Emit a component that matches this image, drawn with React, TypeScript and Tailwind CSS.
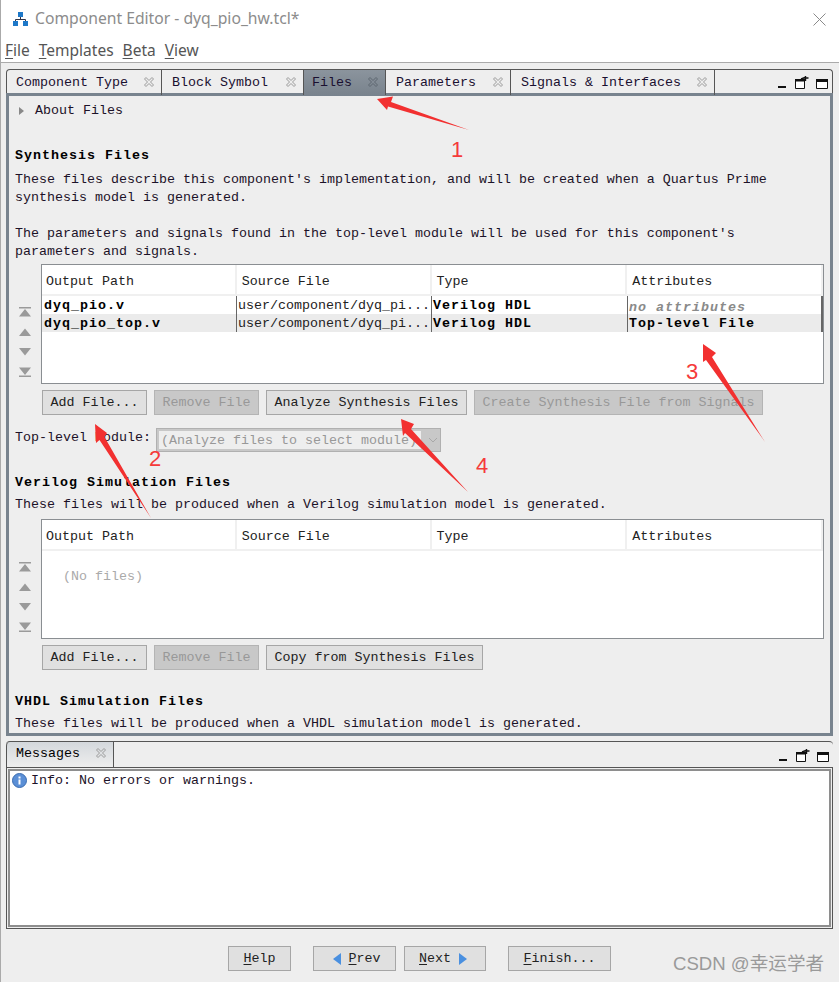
import React from 'react';

const mono = "font-['Liberation_Mono',monospace] text-[13.33px]";
// the bold face in this UI is one pixel wider per character
const bold = 'font-bold tracking-[1px]';

const Shortcut = ({ text }: { text: string }) => (
  <span>
    <span className="underline underline-offset-2">{text[0]}</span>
    {text.slice(1)}
  </span>
);

const CloseMark = ({ color = '#9a9a9a' }: { color?: string }) => (
  <svg width="12" height="12" viewBox="0 0 12 12" className="shrink-0 -mt-[2px]">
    <path d="M1.5 3 3 1.5 6 4.5 9 1.5 10.5 3 7.5 6 10.5 9 9 10.5 6 7.5 3 10.5 1.5 9 4.5 6Z" fill="none" stroke={color} strokeWidth="1" />
  </svg>
);

// minimize / float / maximize glyphs on the dock strip
const DockButtons = () => (
  <div className="flex items-end pb-[5px]">
    <svg width="8" height="2" viewBox="0 0 8 2" className="mb-[1px]"><rect width="8" height="2" fill="#111" /></svg>
    <svg width="14" height="13" viewBox="0 0 14 13" className="ml-[9px]">
      <path d="M.5 3.5h9v9h-9z" fill="#fff" stroke="#111" />
      <rect y="3" width="10" height="2.5" fill="#111" />
      <path d="M6 3 10 1.5M10.5 0v5M9 2h4.5" stroke="#111" strokeWidth="1.4" fill="none" />
    </svg>
    <svg width="12" height="10" viewBox="0 0 12 10" className="ml-[7px]">
      <path d="M.5.5h11v9H.5z" fill="#fff" stroke="#111" />
      <rect width="12" height="3" fill="#111" />
    </svg>
  </div>
);

const Tab = ({ label, box, active }: { label: string; box: string; active?: boolean }) => (
  <div
    className={`${box} h-[25px] flex items-center justify-between pr-[6px] border-r border-[#555] ${
      active ? 'bg-gradient-to-b from-[#8b949d] to-[#79838d]' : ''
    }`}
  >
    <span className="text-[#1a1030]">{label}</span>
    <CloseMark color={active ? '#5d6670' : '#9a9a9a'} />
  </div>
);

const Btn = ({ children, disabled, className = '' }: { children: React.ReactNode; disabled?: boolean; className?: string }) => (
  <div
    className={`h-[25px] flex items-center border whitespace-nowrap ${
      disabled ? 'bg-[#c8c8c8] border-[#b4b4b4] text-[#989898]' : 'bg-[#e0e0e0] border-[#a6a6a6] text-[#222]'
    } ${className}`}
  >
    {children}
  </div>
);

const MoveArrows = () => (
  <div className="w-[26px] pl-[3px] flex flex-col justify-end gap-[10px] pb-[7px] shrink-0">
    <svg width="14" height="10" viewBox="0 0 14 10"><path d="M1 0h12v1.5H1zM7 2l6 7.5H1z" fill="#9a9a9a" /></svg>
    <svg width="14" height="10" viewBox="0 0 14 10"><path d="M7 1.5l6 7.5H1z" fill="#9a9a9a" /></svg>
    <svg width="14" height="10" viewBox="0 0 14 10"><path d="M7 8.5 13 1H1z" fill="#9a9a9a" /></svg>
    <svg width="14" height="10" viewBox="0 0 14 10"><path d="M7 8L13 .5H1zM1 8.5h12V10H1z" fill="#9a9a9a" /></svg>
  </div>
);

const columns = ['Output Path', 'Source File', 'Type', 'Attributes'];
const colWidths = ['w-[195px] pl-[4px]', 'w-[195px] pl-[5px]', 'w-[196px] pl-[5px]', 'w-[196px] pl-[5px]'];

const FileTable = ({ children }: { children: React.ReactNode }) => (
  <div className="flex">
    <MoveArrows />
    <div className="w-[783px] h-[120px] bg-white border border-[#8a8e92]">
      <div className="flex h-[31px] border-b-2 border-[#f0f0f0]">
        {columns.map((c, i) => (
          <div key={c} className={`${colWidths[i]} pt-[4px] flex items-center border-r-2 border-[#f0f0f0] text-[#222]`}>
            {c}
          </div>
        ))}
      </div>
      {children}
    </div>
  </div>
);

const FileRow = ({ name, type, attr, muted, shaded }: { name: string; type: string; attr: string; muted?: boolean; shaded?: boolean }) => (
  <div className={`flex h-[18px] leading-[19px] ${shaded ? 'bg-[#ebebeb]' : ''}`}>
    <div className={`w-[194px] pl-[2px] text-black ${bold}`}>{name}</div>
    <div className="w-[195px] pl-[1px] border-l border-[#666] text-[#222]">user/component/dyq_pi...</div>
    <div className={`w-[196px] pl-[1px] border-l border-[#666] text-black ${bold}`}>{type}</div>
    <div className={`w-[196px] pl-[1px] border-l border-r-2 border-[#666] ${bold}`}>
      <span className={muted ? 'block leading-[23px] h-[18px] italic text-[#8a8a8a]' : 'text-black'}>{attr}</span>
    </div>
  </div>
);

const Annotations = () => (
  <>
    <svg width="839" height="982" viewBox="0 0 839 982" className="absolute inset-0 pointer-events-none">
      <path d="M376 99 392 96.5 390 102 468 130 387 106.5 386 110Z" fill="#f23030" />
      <path d="M94 424 106 433 103.5 437 150 518 98.5 440 95 443Z" fill="#f23030" />
      <path d="M702 344 715 353 711 357 764 442 705 360 702 362Z" fill="#f23030" />
      <path d="M400 419 413 424 410 429 467 492 404 433 402 436Z" fill="#f23030" />
    </svg>
    <span className="absolute left-[450px] top-[137px] font-['Liberation_Sans',sans-serif] text-[22px] leading-[26px] text-[#f53a3a]">1</span>
    <span className="absolute left-[148px] top-[446px] font-['Liberation_Sans',sans-serif] text-[22px] leading-[26px] text-[#f53a3a]">2</span>
    <span className="absolute left-[685px] top-[359px] font-['Liberation_Sans',sans-serif] text-[22px] leading-[26px] text-[#f53a3a]">3</span>
    <span className="absolute left-[475px] top-[453px] font-['Liberation_Sans',sans-serif] text-[22px] leading-[26px] text-[#f53a3a]">4</span>
    <span className="absolute left-[672px] top-[952px] font-['Liberation_Sans','Noto_Sans_CJK_SC',sans-serif] text-[18.6px] leading-[24px] text-[#9a9a9a]">CSDN @幸运学者</span>
  </>
);

export default function App() {
  return (
    <div className={`relative w-[839px] h-[982px] overflow-hidden bg-[#eeeeee] ${mono} border-l border-[#aaa]`}>
      {/* Title and menu */}
      <div className="h-[63px] bg-white border-b border-[#aaa] pl-[4px] font-['Noto_Sans',sans-serif]">
        <div className="h-[38px] flex items-center pl-[8px] pr-[13px] text-[15.7px]">
          <svg width="15" height="14" viewBox="0 0 15 14" className="mr-[7px]">
            <rect x="5" y="0" width="5" height="5" fill="#1e78c8" />
            <path d="M7.5 5v3M2.5 10V7.5h10V10" stroke="#334" fill="none" />
            <rect x="0" y="9" width="5" height="5" fill="#1e78c8" />
            <rect x="10" y="9" width="5" height="5" fill="#1e78c8" />
          </svg>
          <span className="text-[#8c8c8c]">Component Editor - dyq_pio_hw.tcl*</span>
          <svg width="13" height="13" viewBox="0 0 13 13" className="ml-auto"><path d="M.5.5l12 12M12.5.5l-12 12" stroke="#8a8a8a" /></svg>
        </div>
        <div className="flex gap-[9px] text-[15.5px] text-[#555] leading-[24px]">
          <Shortcut text="File" />
          <Shortcut text="Templates" />
          <Shortcut text="Beta" />
          <Shortcut text="View" />
        </div>
      </div>

      {/* Files panel */}
      <div className="mt-[6px] ml-[5px] w-[827px]">
        <div className="h-[25px] flex border border-b-0 border-[#555] rounded-t-[4px] -mb-px">
          <Tab label="Component Type" box="w-[155px] pl-[9px]" />
          <Tab label="Block Symbol" box="w-[142px] pl-[10px]" />
          <Tab label="Files" box="w-[82px] pl-[8px]" active />
          <Tab label="Parameters" box="w-[125px] pl-[10px]" />
          <Tab label="Signals & Interfaces" box="w-[204px] pl-[10px]" />
          <div className="flex-1 flex items-end justify-end pr-[4px]"><DockButtons /></div>
        </div>
        <div className="h-[643px] overflow-hidden border-[3px] border-[#78838e] pl-[6px] pt-[2px] text-[#1c1228]">
          <div className="h-[26px] flex items-center gap-[11px] pl-[4px]">
            <span className="w-0 h-0 border-y-[4px] border-y-transparent border-l-[5px] border-l-[#888]" />
            <span>About Files</span>
          </div>
          <div className={`mt-[23px] h-[18px] leading-[18px] text-black ${bold}`}>Synthesis Files</div>
          <div className="mt-[6px] leading-[18px]">
            These files describe this component's implementation, and will be created when a Quartus Prime<br />
            synthesis model is generated.
          </div>
          <div className="mt-[18px] leading-[18px]">
            The parameters and signals found in the top-level module will be used for this component's<br />
            parameters and signals.
          </div>
          <div className="mt-[3px]">
            <FileTable>
              <FileRow name="dyq_pio.v" type="Verilog HDL" attr="no attributes" muted />
              <FileRow name="dyq_pio_top.v" type="Verilog HDL" attr="Top-level File" shaded />
            </FileTable>
          </div>
          <div className="mt-[6px] ml-[27px] flex gap-[7px]">
            <Btn className="px-[7.5px]">Add File...</Btn>
            <Btn className="px-[7.5px]" disabled>Remove File</Btn>
            <Btn className="px-[7.5px]">Analyze Synthesis Files</Btn>
            <Btn className="px-[7.5px]" disabled>Create Synthesis File from Signals</Btn>
          </div>
          <div className="mt-[13px] h-[24px] flex items-center gap-[5px]">
            <span className="-mt-[4px]">Top-level Module:</span>
            <div className="w-[285px] h-[24px] flex items-center pl-[2px] border border-[#b0b0b0] bg-[#c8c8c8] text-[#989898]">
              <span className="h-[18px] w-[262px] pl-[2px] leading-[19px] bg-[#eeeeee] whitespace-nowrap">(Analyze files to select module)</span>
              <svg width="10" height="6" viewBox="0 0 10 6" className="ml-[7px]"><path d="M1 1l4 4 4-4" fill="none" stroke="#a8a8a8" /></svg>
            </div>
          </div>
          <div className={`mt-[22px] h-[18px] leading-[18px] text-black ${bold}`}>Verilog Simulation Files</div>
          <div className="mt-[4px] leading-[18px]">These files will be produced when a Verilog simulation model is generated.</div>
          <div className="mt-[5px]">
            <FileTable>
              <div className="pl-[21px] pt-[16px] text-[#aaaaaa]">(No files)</div>
            </FileTable>
          </div>
          <div className="mt-[6px] ml-[27px] flex gap-[7px]">
            <Btn className="px-[7.5px]">Add File...</Btn>
            <Btn className="px-[7.5px]" disabled>Remove File</Btn>
            <Btn className="px-[7.5px]">Copy from Synthesis Files</Btn>
          </div>
          <div className={`mt-[23px] h-[18px] leading-[18px] text-black ${bold}`}>VHDL Simulation Files</div>
          <div className="mt-[4px] leading-[18px]">These files will be produced when a VHDL simulation model is generated.</div>
        </div>

        {/* Messages panel */}
        <div className="mt-[5px] h-[26px] flex border-t border-[#555] rounded-t-[4px]">
          <div className="w-[108px] flex items-center justify-between pl-[9px] pr-[6px] pb-[2px] border-x border-[#555] rounded-tl-[4px] bg-gradient-to-b from-[#d4d8dc] to-[#eeeeee]">
            <span>Messages</span>
            <CloseMark />
          </div>
          <div className="flex-1 flex items-end justify-end pr-[4px]"><DockButtons /></div>
        </div>
        <div className="h-[162px] border border-[#555] p-px">
          <div className="h-full bg-white border-2 border-[#8e8e8e] flex items-start gap-[4px] pl-[2px] pt-px text-[#1c1228]">
            <svg width="15" height="15" viewBox="0 0 15 15" className="shrink-0 mt-px">
              <circle cx="7.5" cy="7.5" r="7" fill="#5b8fd6" stroke="#3a6cb0" />
              <rect x="6.5" y="6.5" width="2" height="5" fill="#fff" />
              <rect x="6.5" y="3.5" width="2" height="2" fill="#fff" />
            </svg>
            <span className="leading-[18px]">Info: No errors or warnings.</span>
          </div>
        </div>
      </div>

      {/* Footer buttons */}
      <div className="mt-[17px] pl-[227px] flex">
        <Btn className="w-[63px] justify-center"><Shortcut text="Help" /></Btn>
        <Btn className="w-[83px] justify-center gap-[8px] ml-[22px] pl-[4px]">
          <span className="w-0 h-0 border-y-[6px] border-y-transparent border-r-[8px] border-r-[#4a90e0]" />
          <Shortcut text="Prev" />
        </Btn>
        <Btn className="w-[82px] justify-center gap-[8px] ml-[8px] pr-[4px]">
          <Shortcut text="Next" />
          <span className="w-0 h-0 border-y-[6px] border-y-transparent border-l-[8px] border-l-[#4a90e0]" />
        </Btn>
        <Btn className="w-[103px] justify-center ml-[22px]"><Shortcut text="Finish..." /></Btn>
      </div>

      <Annotations />
    </div>
  );
}
